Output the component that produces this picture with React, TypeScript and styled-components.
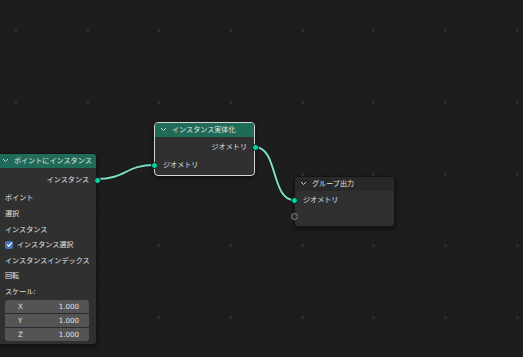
import React from "react";
import styled, { createGlobalStyle, css } from "styled-components";

const GlobalStyle = createGlobalStyle`
  html, body {
    margin: 0;
    padding: 0;
    background: #1d1d1d;
  }
  body {
    font-family: "DejaVu Sans", "Noto Sans CJK JP", sans-serif;
  }
`;

const GRID = 14.333;

const Canvas = styled.div`
  position: relative;
  width: 523px;
  height: 357px;
  overflow: hidden;
  background: #1d1d1d;
`;

const Layer = styled.svg`
  position: absolute;
  left: 0;
  top: 0;
  width: 523px;
  height: 357px;
`;

const Node = styled.div<{ $x: number; $y: number; $w: number; $selected?: boolean }>`
  position: absolute;
  left: ${(p) => p.$x}px;
  top: ${(p) => p.$y}px;
  width: ${(p) => p.$w}px;
  box-sizing: border-box;
  display: flex;
  flex-direction: column;
  background: #303030;
  border-radius: 4px;
  border: 1px solid ${(p) => (p.$selected ? "#d6d6d6" : "#151515")};
  box-shadow: 0 2px 5px rgba(0, 0, 0, 0.55);
  color: #e0e0e0;
  font-size: 7.1px;
  line-height: 1;
`;

const Header = styled.div<{ $color: string }>`
  height: 14px;
  display: flex;
  align-items: center;
  gap: 5px;
  padding: 0 0 1px 5px;
  box-sizing: border-box;
  background: ${(p) => p.$color};
  border-radius: 3px 3px 0 0;
  color: #e4e4e4;
  white-space: nowrap;
  overflow: hidden;
`;

const Chevron = () => (
  <svg width="7" height="5" viewBox="0 0 7 5">
    <path d="M1 1 L3.5 3.5 L6 1" stroke="#d0d0d0" strokeWidth="1" fill="none" />
  </svg>
);

const Body = styled.div<{ $pt: number; $pb: number }>`
  display: flex;
  flex-direction: column;
  padding: ${(p) => p.$pt}px 0 ${(p) => p.$pb}px;
`;

const Row = styled.div<{ $h?: number; $align?: "left" | "right"; $mb?: number }>`
  position: relative;
  height: ${(p) => p.$h ?? 16}px;
  margin-bottom: ${(p) => p.$mb ?? 0}px;
  display: flex;
  align-items: center;
  gap: 4px;
  padding: 0 7px 0 8px;
  white-space: nowrap;
  ${(p) =>
    p.$align === "right" &&
    css`
      justify-content: flex-end;
    `}
`;

const Socket = styled.span<{ $side: "left" | "right"; $kind?: "geo" | "empty" | "value" }>`
  position: absolute;
  top: 50%;
  ${(p) => (p.$side === "left" ? "left: -4.5px;" : "right: -4.5px;")}
  width: 7px;
  height: 7px;
  margin-top: -3.5px;
  box-sizing: border-box;
  border-radius: 50%;
  ${(p) =>
    p.$kind === "empty"
      ? css`
          border: 1px solid #8a8a8a;
          background: #2a2a2a;
        `
      : p.$kind === "value"
      ? css`
          border: 1px solid #141414;
          background: #a1a1a1;
        `
      : css`
          border: 1px solid #141414;
          background: #00d6a3;
        `}
`;

const Check = styled.span`
  width: 8px;
  height: 8px;
  border-radius: 2px;
  background: #4772b3;
  display: flex;
  align-items: center;
  justify-content: center;
`;

const VectorBox = styled.div`
  margin: 1px 7px 0 8px;
  display: flex;
  flex-direction: column;
  gap: 1px;
  border-radius: 3px;
  overflow: hidden;
  background: #2a2a2a;
`;

const VectorField = styled.div`
  height: 13px;
  display: flex;
  align-items: center;
  justify-content: space-between;
  padding: 0 10px 0 13px;
  background: #545454;
  color: #e0e0e0;
`;

const GridDots = () => {
  const dots: React.ReactNode[] = [];
  for (let i = 0; i < 38; i++) {
    for (let j = 0; j < 26; j++) {
      const x = 0.7 + i * GRID;
      const y = 1.7 + j * GRID;
      const big = (i - 1) % 5 === 0 && (j - 2) % 5 === 0;
      dots.push(
        big ? (
          <rect key={`${i}-${j}`} x={Math.round(x) - 1} y={Math.round(y) - 1} width="3" height="3" fill="#2c2c2c" />
        ) : (
          <rect key={`${i}-${j}`} x={Math.round(x)} y={Math.round(y)} width="1" height="1" fill="#282828" />
        )
      );
    }
  }
  return <g shapeRendering="crispEdges">{dots}</g>;
};

const Link = ({ d }: { d: string }) => (
  <g fill="none">
    <path d={d} stroke="#161616" strokeWidth="3.6" />
    <path d={d} stroke="#7ddcc2" strokeWidth="2" />
  </g>
);

export default function App() {
  return (
    <>
      <GlobalStyle />
      <Canvas>
        <Layer>
          <GridDots />
          <Link d="M97 179 C 126 179, 126 165, 154 165" />
          <Link d="M255 147 C 278 147, 271 200, 294 200" />
        </Layer>

        <Node $x={-4} $y={153} $w={101}>
          <Header $color="#1f6b58">
            <Chevron />
            ポイントにインスタンス
          </Header>
          <Body $pt={4} $pb={3}>
            <Row $align="right" $mb={2}>
              インスタンス
              <Socket $side="right" />
            </Row>
            <Row>
              <Socket $side="left" />
              ポイント
            </Row>
            <Row $h={15.5}>
              <Socket $side="left" $kind="value" />
              選択
            </Row>
            <Row $h={15.5}>
              <Socket $side="left" />
              インスタンス
            </Row>
            <Row $h={15.5}>
              <Check>
                <svg width="7" height="7" viewBox="0 0 7 7">
                  <path d="M1.2 3.6 L2.8 5.2 L5.8 1.6" stroke="#fff" strokeWidth="1.2" fill="none" />
                </svg>
              </Check>
              インスタンス選択
            </Row>
            <Row $h={15.5}>
              <Socket $side="left" $kind="value" />
              インスタンスインデックス
            </Row>
            <Row $h={15.5}>
              <Socket $side="left" $kind="value" />
              回転
            </Row>
            <Row $h={15.5}>
              <Socket $side="left" $kind="value" />
              スケール:
            </Row>
            <VectorBox>
              <VectorField>
                <span>X</span>
                <span>1.000</span>
              </VectorField>
              <VectorField>
                <span>Y</span>
                <span>1.000</span>
              </VectorField>
              <VectorField>
                <span>Z</span>
                <span>1.000</span>
              </VectorField>
            </VectorBox>
          </Body>
        </Node>

        <Node $x={154} $y={122} $w={101} $selected>
          <Header $color="#1f6b58">
            <Chevron />
            インスタンス実体化
          </Header>
          <Body $pt={2} $pb={2}>
            <Row $align="right" $mb={2}>
              ジオメトリ
              <Socket $side="right" />
            </Row>
            <Row>
              <Socket $side="left" />
              ジオメトリ
            </Row>
          </Body>
        </Node>

        <Node $x={294} $y={176} $w={101}>
          <Header $color="#282828">
            <Chevron />
            グループ出力
          </Header>
          <Body $pt={1} $pb={2}>
            <Row>
              <Socket $side="left" />
              ジオメトリ
            </Row>
            <Row>
              <Socket $side="left" $kind="empty" />
            </Row>
          </Body>
        </Node>
      </Canvas>
    </>
  );
}
